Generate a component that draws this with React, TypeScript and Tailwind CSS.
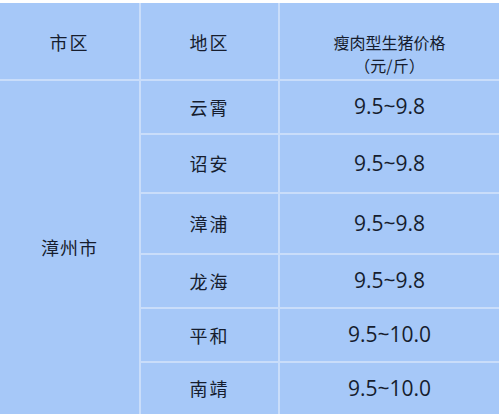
const rows = [
  { area: '云霄', price: '9.5~9.8', h: 'h-[52px]' },
  { area: '诏安', price: '9.5~9.8', h: 'h-[57px]' },
  { area: '漳浦', price: '9.5~9.8', h: 'h-[59px]' },
  { area: '龙海', price: '9.5~9.8', h: 'h-[52px]' },
  { area: '平和', price: '9.5~10.0', h: 'h-[52px]' },
  { area: '南靖', price: '9.5~10.0', h: 'h-[51px]' },
];

const cjk = "font-['Noto_Sans_CJK_SC',sans-serif]";
const num = "font-['Open_Sans',sans-serif]";

export default function App() {
  return (
    <div className="w-[499px] h-[417px] bg-white pt-[3px] overflow-hidden">
      <div className="grid grid-cols-[139px_137px_1fr] gap-[2px] bg-[#c9ddfa] text-[#161d2e]">
        <div className={`h-[76px] bg-[#a6c8f8] flex items-center justify-center pt-[2px] text-[18px] tracking-[2px] ${cjk}`}>
          市区
        </div>
        <div className={`h-[76px] bg-[#a6c8f8] flex items-center justify-center pt-[2px] text-[18px] tracking-[2px] ${cjk}`}>
          地区
        </div>
        <div className={`h-[76px] bg-[#a6c8f8] flex flex-col items-center justify-start pt-[28px] text-[16px] overflow-hidden ${cjk}`}>
          <span className="block leading-[23px]">瘦肉型生猪价格</span>
          <span className="block leading-[23px]">（元/斤）</span>
        </div>

        <div className={`row-span-6 bg-[#a6c8f8] flex items-center justify-center text-[18px] tracking-[1px] ${cjk}`}>
          漳州市
        </div>
        {rows.map((r) => (
          <div key={r.area} className="contents">
            <div className={`${r.h} bg-[#a6c8f8] flex items-center justify-center text-[18px] tracking-[2px] ${cjk}`}>
              {r.area}
            </div>
            <div className={`${r.h} bg-[#a6c8f8] flex items-center justify-center text-[21px] ${num}`}>
              {r.price}
            </div>
          </div>
        ))}
      </div>
    </div>
  );
}
